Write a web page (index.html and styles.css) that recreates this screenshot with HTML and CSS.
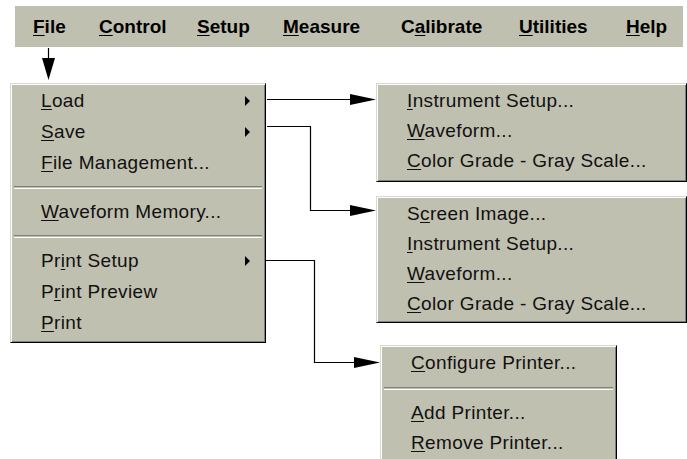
FILE: index.html
```html
<!DOCTYPE html>
<html>
<head>
<meta charset="utf-8">
<link rel="stylesheet" href="styles.css">
</head>
<body>
<div class="page">
  <div class="menubar">
    <span class="mb-item"><u>F</u>ile</span>
    <span class="mb-item"><u>C</u>ontrol</span>
    <span class="mb-item"><u>S</u>etup</span>
    <span class="mb-item"><u>M</u>easure</span>
    <span class="mb-item">C<u>a</u>librate</span>
    <span class="mb-item"><u>U</u>tilities</span>
    <span class="mb-item"><u>H</u>elp</span>
  </div>
  <div class="diagram">
    <div class="menu file-menu">
      <div class="row"><span><u>L</u>oad</span><i class="sub-arrow"></i></div>
      <div class="row"><span><u>S</u>ave</span><i class="sub-arrow"></i></div>
      <div class="row"><span><u>F</u>ile Management...</span></div>
      <div class="sep"></div>
      <div class="row"><span><u>W</u>aveform Memory...</span></div>
      <div class="sep"></div>
      <div class="row"><span>Pr<u>i</u>nt Setup</span><i class="sub-arrow"></i></div>
      <div class="row"><span>P<u>r</u>int Preview</span></div>
      <div class="row"><span><u>P</u>rint</span></div>
    </div>
    <div class="subs">
      <div class="menu sub sub-load">
        <div class="row srow"><span><u>I</u>nstrument Setup...</span></div>
        <div class="row srow"><span><u>W</u>aveform...</span></div>
        <div class="row srow"><span><u>C</u>olor Grade - Gray Scale...</span></div>
      </div>
      <div class="menu sub sub-save">
        <div class="row srow"><span>S<u>c</u>reen Image...</span></div>
        <div class="row srow"><span><u>I</u>nstrument Setup...</span></div>
        <div class="row srow"><span><u>W</u>aveform...</span></div>
        <div class="row srow"><span><u>C</u>olor Grade - Gray Scale...</span></div>
      </div>
      <div class="menu sub sub-print">
        <div class="row srow"><span><u>C</u>onfigure Printer...</span></div>
        <div class="sep psep"></div>
        <div class="row srow"><span><u>A</u>dd Printer...</span></div>
        <div class="row srow"><span><u>R</u>emove Printer...</span></div>
      </div>
    </div>
  </div>
  <svg class="connectors" width="687" height="459" viewBox="0 0 687 459">
    <g stroke="#000" stroke-width="1.2" fill="none">
      <path d="M48.5 48 V60"/>
      <path d="M267 99.5 H352"/>
      <path d="M267 126.5 H310.5 V210.5 H352"/>
      <path d="M266 260.5 H314.5 V362.5 H356"/>
    </g>
    <g fill="#000">
      <polygon points="42,58 55,58 48.5,80"/>
      <polygon points="350,94 376,99.5 350,105"/>
      <polygon points="350,205 376,210.5 350,216"/>
      <polygon points="354,357 380,362.5 354,368"/>
    </g>
  </svg>
</div>
</body>
</html>
```

FILE: styles.css
```css
html, body {
  margin: 0;
  padding: 0;
  background: #fff;
}

.page {
  position: relative;
  width: 687px;
  height: 459px;
  overflow: hidden;
  font-family: "Liberation Sans", Arial, sans-serif;
  color: #000;
}

.menubar {
  margin: 6px 4px 0 15px;
  height: 41px;
  background: #c0c0b0;
  display: grid;
  grid-template-columns: 66px 98px 86px 118px 118px 107px auto;
  padding-left: 18px;
  align-items: center;
  font-weight: bold;
  font-size: 19px;
}

.mb-item {
  line-height: 41px;
  white-space: nowrap;
  padding-bottom: 1px;
}

u {
  text-decoration: underline;
  text-decoration-thickness: 1px;
  text-underline-offset: 2px;
}

.diagram {
  display: flex;
  margin-top: 36px;
}

.menu {
  background: #c0c0b0;
  border-top: 1px solid #d8d8cc;
  border-left: 1px solid #d8d8cc;
  border-right: 1px solid #000;
  border-bottom: 1px solid #000;
  box-shadow: inset 1px 1px 0 #fff, inset -1px -1px 0 #808078;
  box-sizing: border-box;
  font-size: 19px;
  color: #111;
}

.file-menu {
  margin-left: 10px;
  width: 256px;
  height: 260px;
  padding: 1px 1px 0 1px;
}

.row {
  height: 31px;
  display: flex;
  align-items: center;
  padding-left: 29px;
  padding-right: 14px;
  white-space: nowrap;
  letter-spacing: 0.35px;
}

.row span {
  line-height: 31px;
}

.sub-arrow {
  margin-left: auto;
  width: 0;
  height: 0;
  border-top: 5px solid transparent;
  border-bottom: 5px solid transparent;
  border-left: 5px solid #000;
}

.sep {
  height: 18px;
  display: flex;
  align-items: center;
  padding: 0 2px;
}

.sep::before {
  content: "";
  flex: 1;
  height: 1px;
  border-top: 1px solid #808078;
  border-bottom: 1px solid #fff;
}

.subs {
  display: flex;
  flex-direction: column;
  margin-left: 110px;
}

.sub {
  padding: 2px 1px 0 1px;
}

.srow {
  height: 30px;
}

.srow span {
  line-height: 30px;
}

.sub-load {
  width: 311px;
  height: 99px;
}

.sub-save {
  width: 311px;
  height: 127px;
  margin-top: 14px;
}

.sub-print {
  width: 237px;
  height: 130px;
  margin-top: 22px;
  margin-left: 4px;
}

.psep {
  height: 20px;
}

.connectors {
  position: absolute;
  top: 0;
  left: 0;
  pointer-events: none;
}
```
